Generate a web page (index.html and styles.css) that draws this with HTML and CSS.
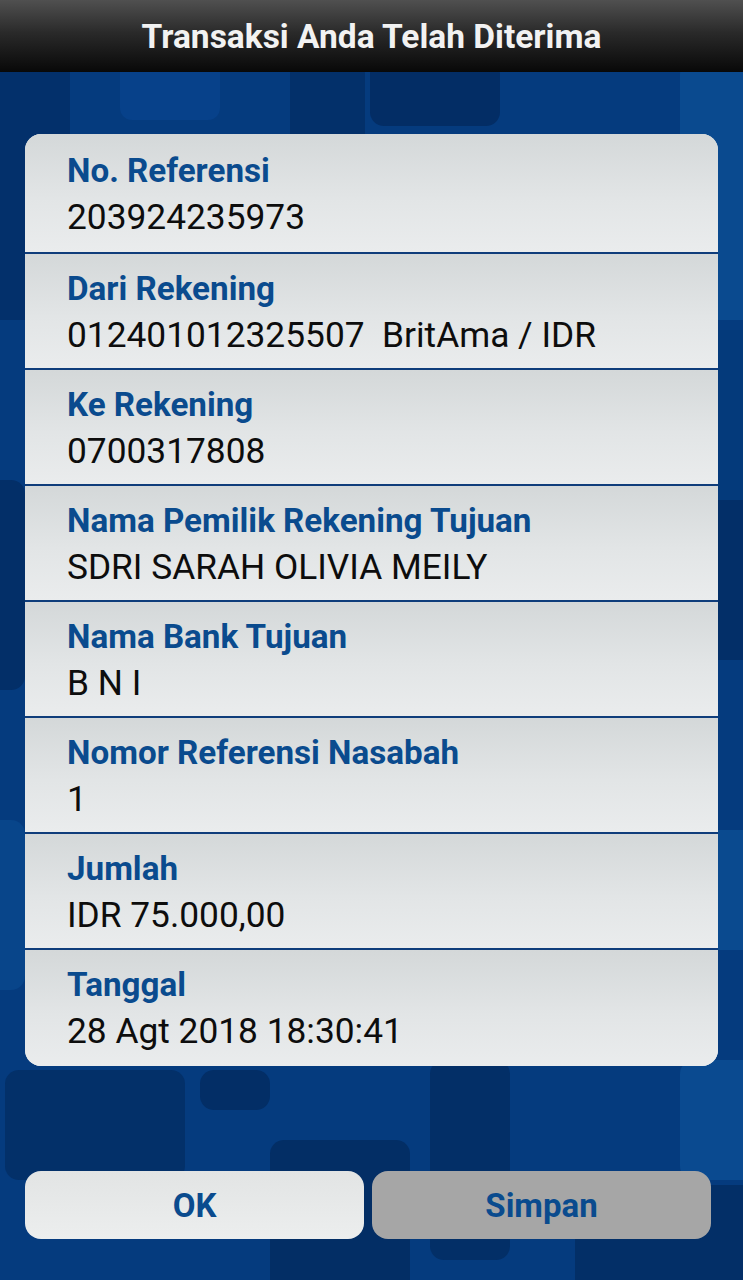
FILE: index.html
```html
<!DOCTYPE html>
<html lang="id">
<head>
<meta charset="utf-8">
<title>Transaksi Anda Telah Diterima</title>
<link rel="stylesheet" href="styles.css">
</head>
<body>
<div class="screen">
  <div class="pattern" aria-hidden="true">
    <span class="tile t1"></span>
    <span class="tile t2"></span>
    <span class="tile t3"></span>
    <span class="tile t4"></span>
    <span class="tile t5"></span>
    <span class="tile t6"></span>
    <span class="tile t7"></span>
    <span class="tile t8"></span>
    <span class="tile t9"></span>
    <span class="tile t10"></span>
    <span class="tile t11"></span>
    <span class="tile t12"></span>
    <span class="tile t13"></span>
    <span class="tile t14"></span>
    <span class="tile t15"></span>
    <span class="tile t16"></span>
  </div>
  <header class="topbar">
    <h1 class="title">Transaksi Anda Telah Diterima</h1>
  </header>
  <main class="content">
    <section class="card">
      <div class="row first">
        <div class="label">No. Referensi</div>
        <div class="value">203924235973</div>
      </div>
      <div class="row">
        <div class="label">Dari Rekening</div>
        <div class="value">012401012325507&nbsp; BritAma / IDR</div>
      </div>
      <div class="row">
        <div class="label">Ke Rekening</div>
        <div class="value">0700317808</div>
      </div>
      <div class="row">
        <div class="label">Nama Pemilik Rekening Tujuan</div>
        <div class="value">SDRI SARAH OLIVIA MEILY</div>
      </div>
      <div class="row">
        <div class="label">Nama Bank Tujuan</div>
        <div class="value">B N I</div>
      </div>
      <div class="row">
        <div class="label">Nomor Referensi Nasabah</div>
        <div class="value">1</div>
      </div>
      <div class="row">
        <div class="label">Jumlah</div>
        <div class="value">IDR 75.000,00</div>
      </div>
      <div class="row last">
        <div class="label">Tanggal</div>
        <div class="value">28 Agt 2018 18:30:41</div>
      </div>
    </section>
    <div class="actions">
      <button class="btn btn-ok" type="button">OK</button>
      <button class="btn btn-save" type="button">Simpan</button>
    </div>
  </main>
</div>
</body>
</html>
```
FILE: styles.css
```css
* { box-sizing: border-box; }

html, body {
  margin: 0;
  padding: 0;
}

body {
  font-family: Roboto, "Noto Sans", "Liberation Sans", sans-serif;
  background: #053b7e;
}

.screen {
  position: relative;
  width: 743px;
  height: 1280px;
  overflow: hidden;
  background: #053b7e;
}

/* decorative background pattern */
.pattern {
  position: absolute;
  inset: 0;
  z-index: 0;
}

.tile {
  position: absolute;
  display: block;
  border-radius: 14px;
}

.t1 { left: -20px; top: 60px; width: 90px; height: 260px; background: #03306b; }
.t2 { left: 120px; top: 60px; width: 100px; height: 60px; background: #07418a; border-radius: 0 0 12px 12px; }
.t3 { left: 290px; top: 60px; width: 75px; height: 120px; background: #03306a; }
.t4 { left: 370px; top: 60px; width: 130px; height: 66px; background: #032d65; }
.t5 { left: 680px; top: 60px; width: 90px; height: 260px; background: #0a4a8f; }
.t6 { left: 700px; top: 330px; width: 80px; height: 170px; background: #043a7b; }
.t7 { left: 700px; top: 500px; width: 80px; height: 160px; background: #032f68; }
.t8 { left: 700px; top: 830px; width: 80px; height: 120px; background: #0a4a8f; }
.t9 { left: -20px; top: 480px; width: 45px; height: 210px; background: #032f68; }
.t10 { left: -20px; top: 820px; width: 45px; height: 170px; background: #08458a; }
.t11 { left: 5px; top: 1070px; width: 180px; height: 110px; background: #033069; }
.t12 { left: 200px; top: 1070px; width: 70px; height: 40px; background: #032e66; }
.t13 { left: 270px; top: 1140px; width: 140px; height: 160px; background: #032e65; }
.t14 { left: 430px; top: 1060px; width: 80px; height: 200px; background: #032f67; }
.t15 { left: 575px; top: 1185px; width: 200px; height: 120px; background: #032f67; }
.t16 { left: 680px; top: 1060px; width: 90px; height: 120px; background: #0a4a90; }

.topbar {
  position: relative;
  z-index: 1;
  height: 72px;
  background: linear-gradient(#505050 0%, #2a2a2a 45%, #080808 100%);
  display: flex;
  align-items: center;
  justify-content: center;
}

.title {
  margin: 0;
  color: #f2f2f2;
  font-size: 33.5px;
  font-weight: 700;
  line-height: 72px;
  padding-top: 2px;
}

.content {
  position: relative;
  z-index: 1;
  padding: 62px 25px 0;
}

.card {
  width: 693px;
  border-radius: 16px;
  overflow: hidden;
  background: #e6e9ea;
}

.row {
  padding: 15px 42px 11px;
  border-top: 2px solid #0f3d7b;
  background: linear-gradient(#d4d8d9 0%, #e2e5e6 55%, #eaeced 100%);
}

.row.first {
  border-top: none;
  padding-top: 17px;
  padding-bottom: 13px;
}

.row.last {
  padding-bottom: 13px;
}

.label {
  color: #0a4b8e;
  font-size: 33.2px;
  font-weight: 700;
  line-height: 40px;
  white-space: nowrap;
}

.value {
  margin-top: 4px;
  color: #0d0d0d;
  font-size: 35.3px;
  font-weight: 400;
  line-height: 44px;
  white-space: nowrap;
}

.actions {
  display: flex;
  gap: 8px;
  margin-top: 105px;
  width: 686px;
}

.btn {
  flex: 1;
  height: 68px;
  border: none;
  border-radius: 16px;
  font-family: Roboto, "Noto Sans", "Liberation Sans", sans-serif;
  font-size: 33px;
  font-weight: 700;
  color: #0a4b8e;
  padding: 0;
}

.btn-ok {
  background: linear-gradient(#e2e4e4, #eceeee);
}

.btn-save {
  background: #a6a6a6;
}
```
